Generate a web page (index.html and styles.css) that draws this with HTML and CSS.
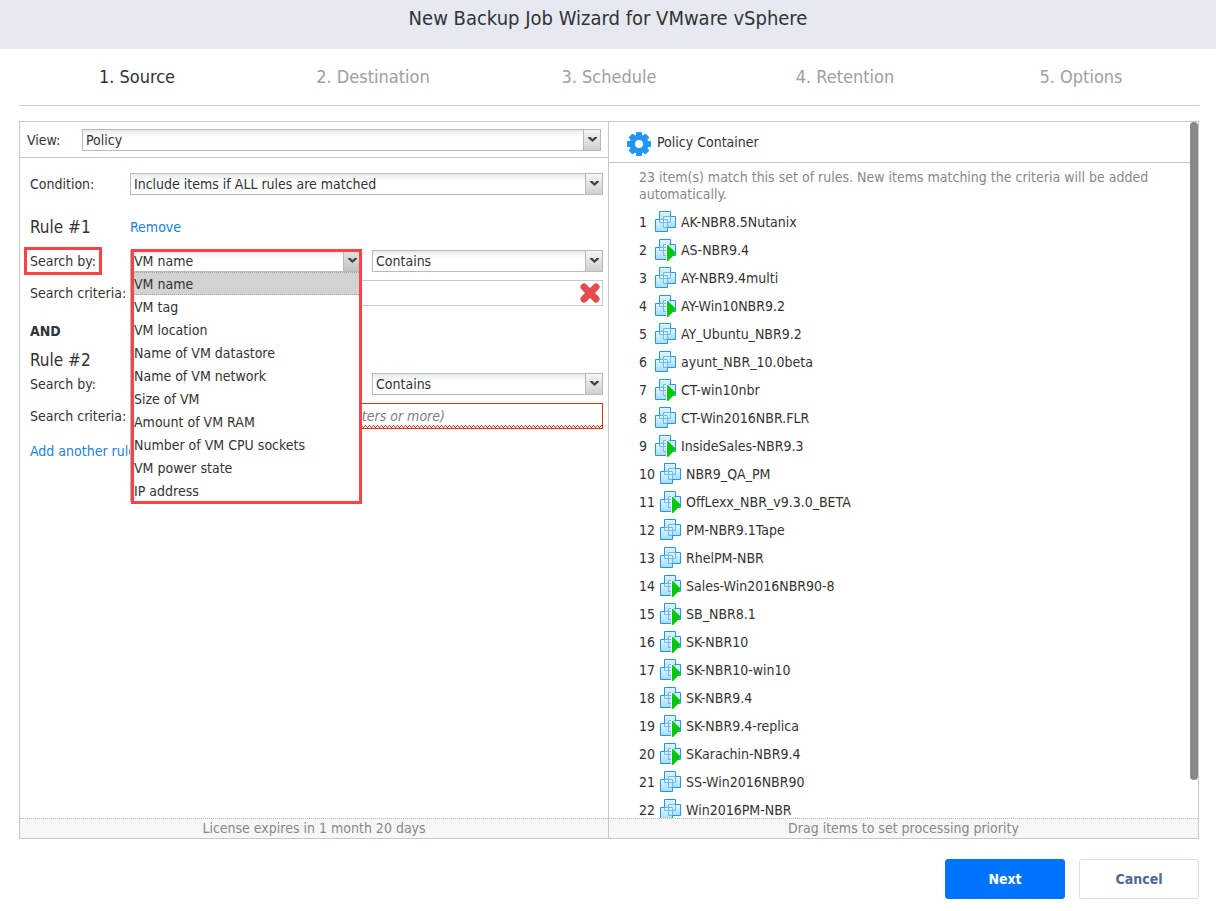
FILE: index.html
```html
<!DOCTYPE html>
<html lang="en">
<head>
<meta charset="utf-8">
<title>New Backup Job Wizard for VMware vSphere</title>
<link rel="stylesheet" href="styles.css">
</head>
<body>
<svg class="defs" aria-hidden="true">
  <defs>
    <linearGradient id="sheet" x1="0" y1="0" x2="0" y2="1">
      <stop offset="0" stop-color="#e4f6fe"/>
      <stop offset="1" stop-color="#a5ddfa"/>
    </linearGradient>
    <symbol id="vm" viewBox="0 0 21 23">
      <rect x="4.5" y=".5" width="11" height="11" fill="url(#sheet)"/>
      <rect x="8.500" y="5.500" width="12" height="11" fill="url(#sheet)"/>
      <rect x=".5" y="8.500" width="12" height="12" fill="url(#sheet)"/>
      <path d="M8.500 16.500V5.500H15.500V11.500H4.500V8.500H12.500V16.500H8.500" fill="none" stroke="#6cb9f3"/>
      <path d="M4.500 8.500V.5H15.500V5.500H20.500V16.500H12.500V20.500H.5V8.500H4.500" fill="none" stroke="#2196f3"/>
    </symbol>
    <symbol id="vm-on" viewBox="0 0 21 23">
      <use href="#vm" width="21" height="23"/>
      <path d="M11 5h2l4 4v10l-4 3h-2z" fill="#fff"/>
      <path d="M12 6h1l8 8-8 8h-1z" fill="#00c80a"/>
    </symbol>
    <symbol id="chevron" viewBox="0 0 9 6">
      <path d="M0 0h2.500l2 2 2-2H9v1L4.500 5 0 1z" fill="#444"/>
    </symbol>
  </defs>
</svg>
<div class="wizard">
  <header class="title-bar"><h1>New Backup Job Wizard for VMware vSphere</h1></header>
  <ol class="steps">
    <li class="current" aria-current="step">1. Source</li>
    <li>2. Destination</li>
    <li>3. Schedule</li>
    <li>4. Retention</li>
    <li>5. Options</li>
  </ol>
  <main class="panels">
    <section class="panel">
      <div class="view-row">
        <label for="view">View:</label>
        <div class="combo"><select id="view"><option>Policy</option></select><span class="trigger"><svg><use href="#chevron"/></svg></span></div>
      </div>
      <form class="rules">
        <div class="row condition">
          <label for="condition">Condition:</label>
          <div class="combo"><select id="condition"><option>Include items if ALL rules are matched</option></select><span class="trigger"><svg><use href="#chevron"/></svg></span></div>
        </div>
        <div class="row heading first">
          <h2>Rule #1</h2>
          <a href="#">Remove</a>
        </div>
        <div class="row">
          <label for="by1"><span class="marked">Search by:</span></label>
          <div class="pair">
            <div class="combo open">
              <select id="by1"><option>VM name</option></select><span class="trigger"><svg><use href="#chevron"/></svg></span>
              <ul class="menu" role="listbox" aria-label="Search by">
                <li role="option" aria-selected="true">VM name</li>
                <li role="option">VM tag</li>
                <li role="option">VM location</li>
                <li role="option">Name of VM datastore</li>
                <li role="option">Name of VM network</li>
                <li role="option">Size of VM</li>
                <li role="option">Amount of VM RAM</li>
                <li role="option">Number of VM CPU sockets</li>
                <li role="option">VM power state</li>
                <li role="option">IP address</li>
              </ul>
            </div>
            <div class="combo"><select aria-label="Match"><option>Contains</option></select><span class="trigger"><svg><use href="#chevron"/></svg></span></div>
          </div>
        </div>
        <div class="row">
          <label for="criteria1">Search criteria:</label>
          <div class="field">
            <input id="criteria1" type="text">
            <button type="button" class="clear" aria-label="Clear"><svg viewBox="0 0 20 20"><path d="M4 4l12 12M16 4L4 16" stroke="#e34b4e" stroke-width="7" stroke-linecap="round"/></svg></button>
          </div>
        </div>
        <p class="and">AND</p>
        <div class="row heading second"><h2>Rule #2</h2></div>
        <div class="row tight">
          <label for="by2">Search by:</label>
          <div class="pair">
            <div class="combo"><select id="by2"><option>VM name</option></select><span class="trigger"><svg><use href="#chevron"/></svg></span></div>
            <div class="combo"><select aria-label="Match"><option>Contains</option></select><span class="trigger"><svg><use href="#chevron"/></svg></span></div>
          </div>
        </div>
        <div class="row">
          <label for="criteria2">Search criteria:</label>
          <div class="field invalid">
            <input id="criteria2" type="text" placeholder="Enter a search string here (3 characters or more)">
            <svg class="squiggle" aria-hidden="true"><defs><pattern id="wave" width="4" height="3" patternUnits="userSpaceOnUse"><path d="M0 2h1v1H0zM1 1h1v1H1zM2 0h1v1H2zM3 1h1v1H3z" fill="#d03020"/></pattern></defs><rect width="100%" height="3" fill="url(#wave)"/></svg>
          </div>
        </div>
        <p class="add"><a href="#">Add another rule</a></p>
      </form>
      <footer>License expires in 1 month 20 days</footer>
    </section>
    <section class="panel">
      <div class="scroller">
        <div class="content">
          <div class="container-title">
            <svg class="gear" viewBox="0 0 24 24"><g fill="#2196f3"><circle cx="12" cy="12" r="9.500"/><g id="teeth"><rect x="9" y="0" width="6" height="24" rx="1"/><rect x="0" y="9" width="24" height="6" rx="1"/></g><use href="#teeth" transform="rotate(45 12 12)"/></g><circle cx="12" cy="12" r="4" fill="#fff"/></svg>
            <h2>Policy Container</h2>
          </div>
          <p class="intro">23 item(s) match this set of rules. New items matching the criteria will be added automatically.</p>
          <ol class="items">
            <li><span class="num">1</span><svg><use href="#vm"/></svg>AK-NBR8.5Nutanix</li>
            <li><span class="num">2</span><svg><use href="#vm-on"/></svg>AS-NBR9.4</li>
            <li><span class="num">3</span><svg><use href="#vm"/></svg>AY-NBR9.4multi</li>
            <li><span class="num">4</span><svg><use href="#vm-on"/></svg>AY-Win10NBR9.2</li>
            <li><span class="num">5</span><svg><use href="#vm"/></svg>AY_Ubuntu_NBR9.2</li>
            <li><span class="num">6</span><svg><use href="#vm"/></svg>ayunt_NBR_10.0beta</li>
            <li><span class="num">7</span><svg><use href="#vm-on"/></svg>CT-win10nbr</li>
            <li><span class="num">8</span><svg><use href="#vm"/></svg>CT-Win2016NBR.FLR</li>
            <li><span class="num">9</span><svg><use href="#vm-on"/></svg>InsideSales-NBR9.3</li>
            <li><span class="num">10</span><svg><use href="#vm"/></svg>NBR9_QA_PM</li>
            <li><span class="num">11</span><svg><use href="#vm-on"/></svg>OffLexx_NBR_v9.3.0_BETA</li>
            <li><span class="num">12</span><svg><use href="#vm"/></svg>PM-NBR9.1Tape</li>
            <li><span class="num">13</span><svg><use href="#vm"/></svg>RhelPM-NBR</li>
            <li><span class="num">14</span><svg><use href="#vm-on"/></svg>Sales-Win2016NBR90-8</li>
            <li><span class="num">15</span><svg><use href="#vm-on"/></svg>SB_NBR8.1</li>
            <li><span class="num">16</span><svg><use href="#vm-on"/></svg>SK-NBR10</li>
            <li><span class="num">17</span><svg><use href="#vm-on"/></svg>SK-NBR10-win10</li>
            <li><span class="num">18</span><svg><use href="#vm-on"/></svg>SK-NBR9.4</li>
            <li><span class="num">19</span><svg><use href="#vm-on"/></svg>SK-NBR9.4-replica</li>
            <li><span class="num">20</span><svg><use href="#vm-on"/></svg>SKarachin-NBR9.4</li>
            <li><span class="num">21</span><svg><use href="#vm"/></svg>SS-Win2016NBR90</li>
            <li><span class="num">22</span><svg><use href="#vm"/></svg>Win2016PM-NBR</li>
          </ol>
        </div>
        <div class="track"><div class="thumb"></div></div>
      </div>
      <footer>Drag items to set processing priority</footer>
    </section>
  </main>
  <div class="actions">
    <button type="button" class="btn primary">Next</button>
    <button type="button" class="btn">Cancel</button>
  </div>
</div>
</body>
</html>
```

FILE: styles.css
```css
* { box-sizing: border-box; }
body, h1, h2, p, ol, ul { margin: 0; padding: 0; }
ol, ul { list-style: none; }
h1, h2 { font-weight: 400; }
body, input, select, button { font-family: Tahoma, "DejaVu Sans Condensed", "Noto Sans", sans-serif; font-size: 14px; color: #333; }
body { background: #fff; line-height: 20px; }
a { color: #2080e0; text-decoration: none; }
.defs { position: absolute; width: 0; height: 0; }

.wizard { display: flex; flex-direction: column; height: 100vh; }
.title-bar { flex: none; background: #e6e9f2; text-align: center; padding: 4px 0 17px; }
.title-bar h1 { font-size: 20px; line-height: 28px; }
.steps { flex: none; display: grid; grid-template-columns: repeat(5, 1fr); margin: 0 17px 0 19px; padding: 16px 0; border-bottom: 1px solid #ccc; font-size: 18px; line-height: 24px; text-align: center; color: #a0a0a0; }
.steps .current { color: #333; }

.panels { flex: 1; min-height: 0; display: grid; grid-template-columns: 1fr 1fr; margin: 15px 17px 0 19px; border: 1px solid #c8c8c8; }
.panel { display: flex; flex-direction: column; min-width: 0; min-height: 0; }
.panel:first-child { border-right: 1px solid #c8c8c8; }
.panel footer { flex: none; height: 20px; line-height: 18px; border-top: 1px dotted #bbb; background: #f7f7f7; color: #888; text-align: center; }

.view-row { flex: none; display: grid; grid-template-columns: 55px 1fr; align-items: center; padding: 7px 7px 6px; border-bottom: 1px solid #c8c8c8; }
.rules { flex: 1; min-height: 0; padding: 15px 5px 0 10px; }
.row { display: grid; grid-template-columns: 100px 1fr; align-items: center; margin-top: 8px; }
.row.condition { margin-top: 0; }
.row.tight { margin-top: 1px; }
.heading h2 { font-size: 17px; line-height: 24px; }
.heading.first { margin: 20px 0 11px; }
.heading.second { margin-top: 7px; }
.and { font-weight: 700; margin-top: 15px; }
.add { margin-top: 12px; }
.pair { display: grid; grid-template-columns: 1fr 1fr; gap: 11px; }
.marked { display: inline-block; line-height: 16px; outline: 3px solid #fb4345; outline-offset: 3px; }

.combo { position: relative; height: 22px; }
.combo select { display: block; width: 100%; height: 22px; padding: 0 20px 0 3px; border: 1px solid #b5b8c8; border-radius: 0; appearance: none; background: linear-gradient(#e6eaeb, #fff 7px); }
.trigger { position: absolute; top: 1px; right: 1px; bottom: 1px; width: 17px; display: flex; justify-content: center; padding-top: 7px; border-left: 1px solid #b5b8c8; background: linear-gradient(#f6f6f6, #cfcfcf); pointer-events: none; }
.trigger svg { width: 9px; height: 6px; }
.open .trigger { background: linear-gradient(#e2e2e2, #c2c2c2); }
.menu { position: absolute; z-index: 2; top: 22px; left: 0; right: 0; background: #fff; border-left: 1px solid #b5b8c8; }
.menu li { height: 23px; line-height: 24px; padding-left: 3px; }
.menu li[aria-selected] { background: #d2d2d2; border: 1px dotted #a3a3a3; border-width: 1px 0; line-height: 22px; }
.menu::after { content: ""; position: absolute; top: -23px; right: -1px; bottom: -2px; left: 0; border: 3px solid #fb4345; pointer-events: none; }

.field { position: relative; display: flex; height: 26px; }
.field input { flex: 1; min-width: 0; padding: 0 3px; border: 1px solid #c8c8c8; background: #fff; }
.field input::placeholder { color: #808080; font-style: italic; opacity: 1; }
.field.invalid input { border-color: #cf3a15; }
.squiggle { position: absolute; left: 1px; right: 1px; bottom: 1px; width: calc(100% - 2px); height: 3px; }
.clear { position: absolute; top: 3px; right: 3px; width: 20px; height: 20px; padding: 0; border: 0; background: none; }
.clear svg { display: block; width: 20px; height: 20px; }

.scroller { flex: 1; min-height: 0; display: flex; }
.content { flex: 1; min-width: 0; overflow: hidden; }
.track { width: 8px; }
.thumb { height: 94.5%; border-radius: 4px; background: #888; }
.container-title { display: flex; align-items: center; gap: 6px; height: 41px; padding-left: 18px; border-bottom: 1px solid #c8c8c8; }
.container-title h2 { font-size: 14px; }
.gear { width: 24px; height: 24px; margin-top: 4px; }
.intro { padding: 6px 30px 5px; line-height: 17px; color: #888; }
.items { padding-left: 30px; }
.items li { display: flex; align-items: center; gap: 5px; height: 28px; }
.items svg { width: 21px; height: 23px; }
.num { min-width: 11px; }

.actions { flex: none; display: flex; justify-content: flex-end; gap: 14px; padding: 20px 17px 12px; }
.btn { width: 120px; height: 40px; border: 1px solid #d5dfea; border-radius: 3px; background: #fff; color: #4a6a94; font-size: 14px; font-weight: 700; }
.btn.primary { background: #0073ff; border-color: #0073ff; color: #fff; }
```
